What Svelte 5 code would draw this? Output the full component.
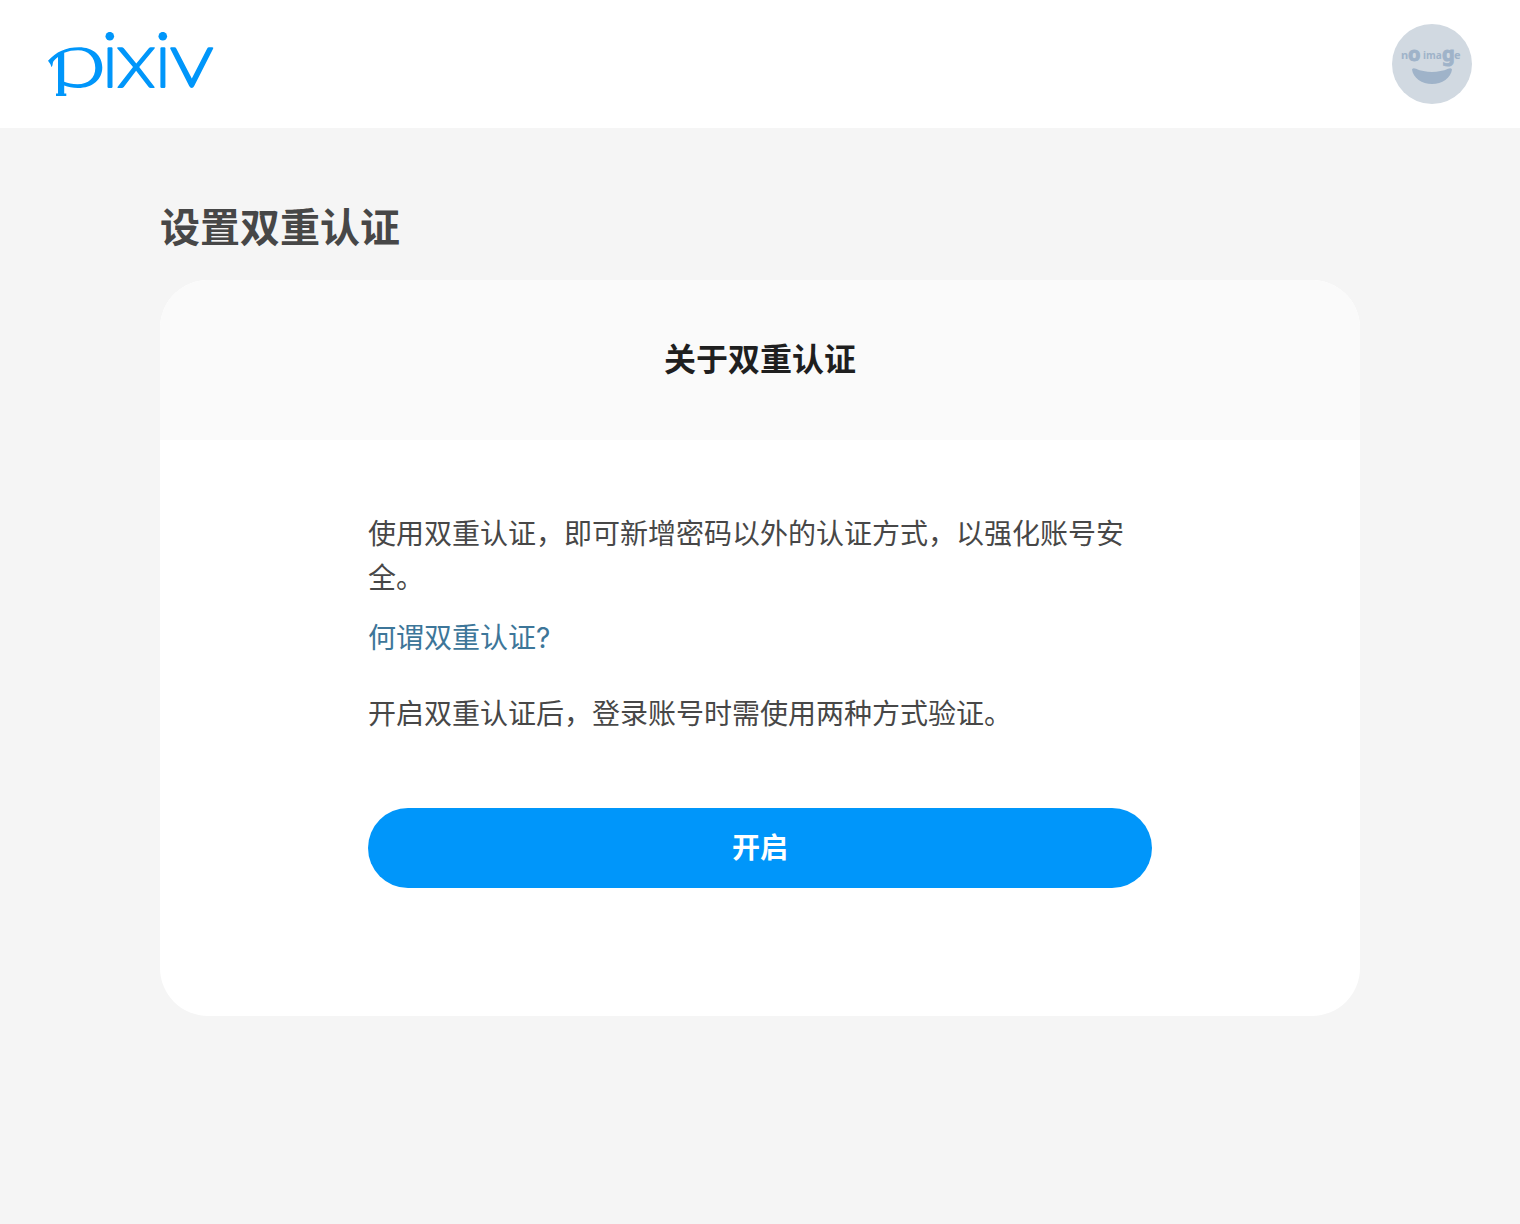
<script>
  const title = '设置双重认证';
  const cardTitle = '关于双重认证';
</script>

<div class="page">
  <header class="topbar">
    <a class="logo" href="/" aria-label="pixiv">
      <svg viewBox="0 0 166 64" width="166" height="64" aria-hidden="true">
        <!-- p: flag, bowl, stem and foot -->
        <path
          fill-rule="evenodd"
          d="M0 28.800 C8 20 18 15.300 31 15.300 C45 15.300 54.300 23.500 54.300 35.500 C54.300 47.500 44.500 56 30 56 C24.500 56 20 55 16.200 53.600 V61.500 H18.300 V64 H8 V61.500 H10 V25 C7.800 26.600 6 28.400 5.200 29.800 C4.400 31.200 5.200 33 3.600 35.200 Q2.800 32 0 28.800 Z
             M16.200 20.700 V49.800 C20 51.400 24 52.200 29.500 52.200 C40.500 52.200 47.300 46 47.300 36 C47.300 25.500 40.500 18.200 30 18.200 C25 18.200 20.500 19 16.200 20.700 Z"
        />
        <circle cx="61.800" cy="4.200" r="4.300" />
        <rect x="59.500" y="15.300" width="5" height="40.700" rx="1.200" />
        <!-- x -->
        <path
          d="M69.300 16.600 Q68.600 15.300 70.300 15.300 H73.800 Q75 15.300 75.800 16.300 L88.300 31.400 L100.800 16.300 Q101.600 15.300 102.800 15.300 H106 Q107.600 15.300 106.600 16.600 L91.200 35 L106.400 54.700 Q107.300 56 105.800 56 H102.700 Q101.400 56 100.600 55 L88.100 38.800 L75.800 55 Q75 56 73.800 56 H70.300 Q68.700 56 69.700 54.700 L85 35 Z"
        />
        <circle cx="114.800" cy="4.200" r="4.300" />
        <rect x="112.400" y="15.300" width="5" height="40.700" rx="1.200" />
        <!-- v -->
        <path
          d="M122.300 16.800 Q121.600 15.300 123.200 15.300 H126.500 Q127.700 15.300 128.300 16.400 L143.800 46.400 L159.200 16.400 Q159.800 15.300 161 15.300 H164.300 Q165.900 15.300 165.100 16.800 L146.200 54 Q145.200 56 143.700 56 Q142.200 56 141.200 54 Z"
        />
      </svg>
    </a>

    <button class="avatar" type="button" aria-label="no image">
      <svg viewBox="0 0 80 80" width="80" height="80" aria-hidden="true">
        <rect width="80" height="80" fill="#d1d9e1" />
        <g class="avatar-text">
          <text x="9" y="35" font-size="11">n</text>
          <text class="big" x="16" y="37" font-size="20">o</text>
          <text x="31" y="35" font-size="10">ima</text>
          <text class="big" x="50" y="37" font-size="20">g</text>
          <text x="62" y="35" font-size="11">e</text>
        </g>
        <path
          fill="#9fb3c9"
          d="M20 45.500 Q21 43.500 24 44.800 C33 49 47 49 56 44.800 Q59 43.500 60 45.500 C59 54 50 60 40 60 C30 60 21 54 20 45.500 Z"
        />
      </svg>
    </button>
  </header>

  <main>
    <h1>{title}</h1>

    <section class="card" aria-labelledby="card-title">
      <div class="card-head">
        <h2 id="card-title">{cardTitle}</h2>
      </div>
      <div class="card-body">
        <p>使用双重认证，即可新增密码以外的认证方式，以强化账号安全。</p>
        <a class="help" href="/help">何谓双重认证?</a>
        <p class="note">开启双重认证后，登录账号时需使用两种方式验证。</p>
        <button class="enable" type="button">开启</button>
      </div>
    </section>
  </main>
</div>

<style>
  :global(body) {
    background: #f5f5f5;
  }

  .page {
    font-family: Inter, 'Noto Sans CJK SC', sans-serif;
    font-size: 28px;
    line-height: 44px;
    color: #474747;
  }

  .topbar {
    display: flex;
    align-items: center;
    justify-content: space-between;
    padding: 24px 48px;
    background: #fff;
  }

  .logo svg {
    display: block;
    fill: #0096fa;
  }

  .avatar {
    padding: 0;
    border: 0;
    border-radius: 50%;
    overflow: hidden;
    background: none;
    cursor: pointer;
  }

  .avatar svg {
    display: block;
  }

  .avatar-text {
    font-family: 'Noto Sans', sans-serif;
    font-weight: 700;
    fill: #9fb3c9;
  }

  .avatar-text .big {
    stroke: #9fb3c9;
    stroke-width: 1px;
  }

  main {
    max-width: 1200px;
    margin: 0 auto;
    padding: 72px 48px;
  }

  h1 {
    margin: 0 0 24px;
    font-size: 40px;
    line-height: 56px;
    font-weight: 700;
  }

  .card {
    border-radius: 48px;
    overflow: hidden;
    background: #fff;
  }

  .card-head {
    padding: 56px 48px;
    background: #fafafa;
    text-align: center;
  }

  h2 {
    margin: 0;
    font-size: 32px;
    line-height: 48px;
    font-weight: 700;
    color: #1f1f1f;
  }

  .card-body {
    display: flex;
    flex-direction: column;
    align-items: stretch;
    max-width: 784px;
    margin: 0 auto;
    padding: 72px 48px 128px;
  }

  p {
    margin: 0;
  }

  .help {
    align-self: flex-start;
    margin-top: 16px;
    color: #3d7699;
    text-decoration: none;
  }

  .note {
    margin-top: 32px;
  }

  .enable {
    margin-top: 72px;
    padding: 18px 48px;
    border: 0;
    border-radius: 40px;
    background: #0096fa;
    color: #fff;
    font: inherit;
    font-weight: 700;
    cursor: pointer;
  }
</style>
